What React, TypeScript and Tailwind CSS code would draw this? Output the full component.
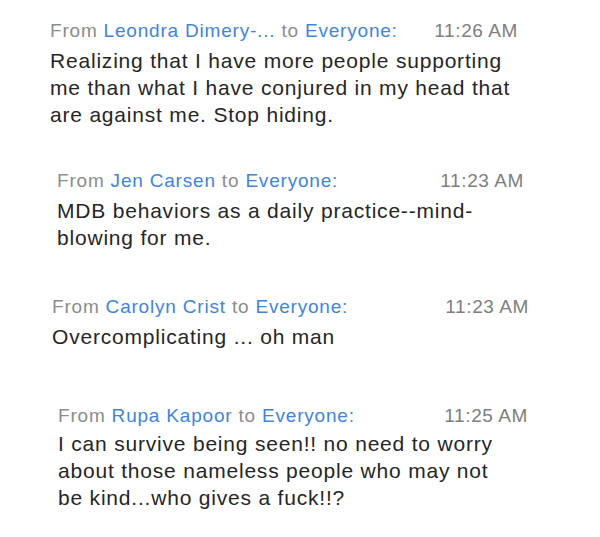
import React from 'react';

interface ChatMessage {
  sender: string;
  time: string;
  lines: string[];
  left: string;
  width: string;
  top: string;
  gap: string;
}

const MESSAGES: ChatMessage[] = [
  {
    sender: 'Leondra Dimery-...',
    time: '11:26 AM',
    lines: [
      'Realizing that I have more people supporting',
      'me than what I have conjured in my head that',
      'are against me. Stop hiding.',
    ],
    left: 'ml-[50px]',
    width: 'w-[468px]',
    top: 'mt-[19px]',
    gap: 'mt-[4px]',
  },
  {
    sender: 'Jen Carsen',
    time: '11:23 AM',
    lines: ['MDB behaviors as a daily practice--mind-', 'blowing for me.'],
    left: 'ml-[57px]',
    width: 'w-[467px]',
    top: 'mt-[41px]',
    gap: 'mt-[4px]',
  },
  {
    sender: 'Carolyn Crist',
    time: '11:23 AM',
    lines: ['Overcomplicating ... oh man'],
    left: 'ml-[52px]',
    width: 'w-[477px]',
    top: 'mt-[44px]',
    gap: 'mt-[4px]',
  },
  {
    sender: 'Rupa Kapoor',
    time: '11:25 AM',
    lines: [
      'I can survive being seen!! no need to worry',
      'about those nameless people who may not',
      'be kind...who gives a fuck!!?',
    ],
    left: 'ml-[58px]',
    width: 'w-[470px]',
    top: 'mt-[54px]',
    gap: 'mt-[2px]',
  },
];

const ChatEntry: React.FC<{ msg: ChatMessage }> = ({ msg }) => (
  <div className={`${msg.left} ${msg.width} ${msg.top}`}>
    {/* header row: sender + time */}
    <div className="flex justify-between items-baseline leading-[24px] whitespace-nowrap">
      <div className="text-[19px] tracking-[0.8px]">
        <span className="text-[#8c8c8c]">From </span>
        <span className="text-[#3f84dd]">{msg.sender}</span>
        <span className="text-[#8c8c8c]"> to </span>
        <span className="text-[#3f84dd]">Everyone:</span>
      </div>
      <span className="text-[19px] tracking-[0.6px] text-[#7e7e7e]">{msg.time}</span>
    </div>
    <div className={`${msg.gap} text-[21px] leading-[27px] tracking-[0.8px] text-[#262626]`}>
      {msg.lines.map((line, i) => (
        <div key={i} className="whitespace-nowrap">
          {line}
        </div>
      ))}
    </div>
  </div>
);

export default function App() {
  return (
    <div className="w-[600px] h-[537px] bg-white overflow-hidden font-['Liberation_Sans',Arial,sans-serif] flow-root">
      {MESSAGES.map((msg, i) => (
        <ChatEntry key={i} msg={msg} />
      ))}
    </div>
  );
}
